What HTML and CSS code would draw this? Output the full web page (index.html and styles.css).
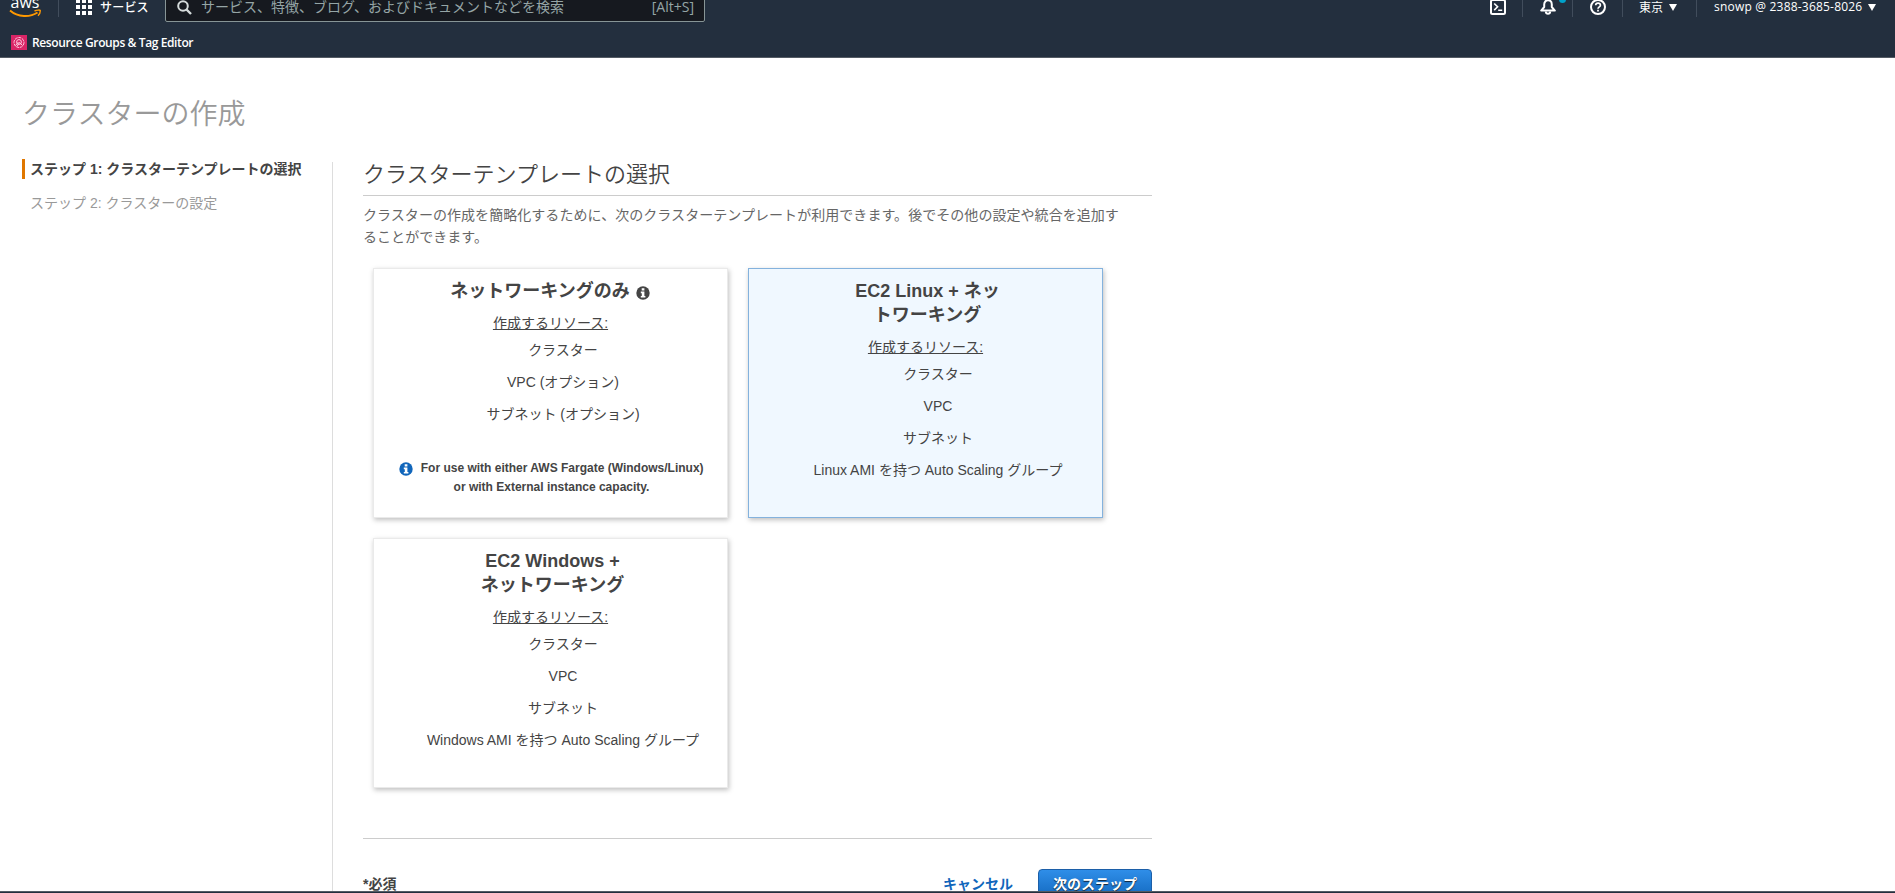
FILE: index.html
```
<!DOCTYPE html>
<html lang="ja">

<head>
    <meta charset="UTF-8">
    <meta name="viewport" content="width=device-width, initial-scale=1.0">
    <title>クラスターの作成</title>
    <link rel="stylesheet" href="styles.css">
</head>

<body>
    <header class="header">
        <div class="nav">
            <a href="#" class="logo">
                <svg width="33" height="26" viewBox="0 0 33 26">
                    <text x="1.5" y="14" textLength="29" lengthAdjust="spacingAndGlyphs" class="logo-text">aws</text>
                    <path d="M1 16.5C9 23.5 21 23.5 28.5 18.5" fill="none" stroke="#ff9900" stroke-width="1.9" />
                    <path d="M25.5 17C28 15.8 31.5 15.8 31.3 16.8C31.3 18.5 30.5 20.5 29 21.7" fill="none" stroke="#ff9900" stroke-width="1.4" />
                </svg>
            </a>
            <a href="#" class="services">
                <svg width="16" height="16" viewBox="0 0 16 16" fill="#fff">
                    <path d="M0 0h4v4H0zM6 0h4v4H6zM12 0h4v4h-4zM0 6h4v4H0zM6 6h4v4H6zM12 6h4v4h-4zM0 12h4v4H0zM6 12h4v4H6zM12 12h4v4h-4z" />
                </svg>
                <span>サービス</span>
            </a>
            <div class="search">
                <svg width="15" height="15" viewBox="0 0 15 15" fill="none" stroke="#d5dbdb" stroke-width="2">
                    <circle cx="6" cy="6" r="4.8" />
                    <path d="M9.5 9.5L14 14" stroke-width="2.4" />
                </svg>
                <span class="search-text">サービス、特徴、ブログ、およびドキュメントなどを検索</span>
                <span class="search-key">[Alt+S]</span>
            </div>
            <div class="nav-right">
                <a href="#" class="nav-icon">
                    <svg width="16" height="16" viewBox="0 0 16 16" fill="none" stroke="#fff" stroke-width="2">
                        <rect x="1" y="1" width="14" height="14" rx="1.5" />
                        <path d="M4.2 4.5L7.6 7.8L4.2 11.1M8.2 11.3h4" stroke-width="1.6" />
                    </svg>
                </a>
                <a href="#" class="nav-icon">
                    <svg width="16" height="16" viewBox="0 0 16 16" fill="none" stroke="#fff" stroke-width="2" stroke-linejoin="round">
                        <path d="M1.2 11.6L4.2 8V5.5C4.2 3 5.8 1.3 8 1.3S11.8 3 11.8 5.5V8L14.8 11.6Z" />
                        <path d="M5.8 12.5C6 15.6 10 15.6 10.2 12.5" />
                    </svg>
                    <span class="badge"></span>
                </a>
                <a href="#" class="nav-icon">
                    <svg width="16" height="16" viewBox="0 0 16 16" fill="none" stroke="#fff" stroke-width="2">
                        <circle cx="8" cy="8" r="7" />
                        <path d="M5.7 6.3C5.7 3.4 10.4 3.5 10.4 6.2C10.4 7.9 8 7.8 8 9.8M8 10.8v1.8" stroke-width="1.7" />
                    </svg>
                </a>
                <a href="#" class="nav-item region">
                    <span>東京</span>
                    <i class="caret"></i>
                </a>
                <a href="#" class="nav-item account">
                    <span>snowp @ 2388-3685-8026</span>
                    <i class="caret"></i>
                </a>
            </div>
        </div>
        <div class="favorites">
            <svg width="16" height="15" viewBox="0 0 16 15" fill="none" stroke="#ffc6dc" stroke-width="1">
                <rect width="16" height="15" fill="#d92566" stroke="none" />
                <circle cx="8" cy="7.5" r="5" stroke-dasharray="3 .7" />
                <circle cx="8" cy="7" r="2.4" />
                <path d="M4.5 10.5L7.5 7M6 11.5L8.5 7.5L11.5 10.5" />
            </svg>
            <a href="#">Resource Groups &amp; Tag Editor</a>
        </div>
    </header>

    <main class="page">
        <h1>クラスターの作成</h1>
        <div class="wizard">
            <ul class="steps">
                <li class="active">ステップ 1: クラスターテンプレートの選択</li>
                <li>ステップ 2: クラスターの設定</li>
            </ul>
            <div class="content">
                <h2>クラスターテンプレートの選択</h2>
                <p class="description">クラスターの作成を簡略化するために、次のクラスターテンプレートが利用できます。後でその他の設定や統合を追加することができます。</p>
                <div class="templates">
                    <div class="card">
                        <h3 class="with-info">ネットワーキングのみ
                            <svg class="info" width="14" height="14" viewBox="0 0 14 14">
                                <circle cx="7" cy="7" r="6.7" fill="#444" />
                                <path d="M5.7 2.3h2.7v2.2H5.7zM4.8 5.6h3.6v4.3h1v1.6H4.8V9.9h1V7.2h-1z" fill="#fff" />
                            </svg>
                        </h3>
                        <p class="resources">作成するリソース:</p>
                        <ul>
                            <li>クラスター</li>
                            <li>VPC (オプション)</li>
                            <li>サブネット (オプション)</li>
                        </ul>
                        <p class="note">
                            <svg class="info" width="14" height="14" viewBox="0 0 14 14">
                                <circle cx="7" cy="7" r="6.7" fill="#1166bb" />
                                <path d="M5.7 2.3h2.7v2.2H5.7zM4.8 5.6h3.6v4.3h1v1.6H4.8V9.9h1V7.2h-1z" fill="#fff" />
                            </svg>
                            For use with either AWS Fargate (Windows/Linux)<br>or with External instance capacity.
                        </p>
                    </div>
                    <div class="card selected">
                        <h3>EC2 Linux + ネッ<br>トワーキング</h3>
                        <p class="resources">作成するリソース:</p>
                        <ul>
                            <li>クラスター</li>
                            <li>VPC</li>
                            <li>サブネット</li>
                            <li>Linux AMI を持つ Auto Scaling グループ</li>
                        </ul>
                    </div>
                    <div class="card">
                        <h3>EC2 Windows +<br>ネットワーキング</h3>
                        <p class="resources">作成するリソース:</p>
                        <ul>
                            <li>クラスター</li>
                            <li>VPC</li>
                            <li>サブネット</li>
                            <li>Windows AMI を持つ Auto Scaling グループ</li>
                        </ul>
                    </div>
                </div>
                <div class="actions">
                    <span class="required">*必須</span>
                    <a href="#" class="cancel">キャンセル</a>
                    <button class="next">次のステップ</button>
                </div>
            </div>
        </div>
    </main>
    <footer class="footer"></footer>
</body>

</html>
```
FILE: styles.css
```
* {
    margin: 0;
    padding: 0;
    box-sizing: border-box;
}

body {
    height: 893px;
    overflow: hidden;
    display: flex;
    flex-direction: column;
    background: #fff;
    color: #444;
    font-family: "Liberation Sans", "Noto Sans CJK JP", sans-serif;
    font-size: 14px;
}

a {
    color: inherit;
    text-decoration: none;
}

ul {
    list-style: none;
}

svg {
    display: block;
    flex: none;
}

/* header */
.header {
    flex: none;
    height: 58px;
    overflow: hidden;
    background: #232f3e;
    border-bottom: 1px solid #545b64;
    color: #fff;
    font-family: "Open Sans", "Noto Sans CJK JP", sans-serif;
    font-size: 12px;
}

.nav {
    height: 40px;
    margin-top: -13px;
    display: flex;
    align-items: center;
}

.logo {
    width: 59px;
    height: 20px;
    padding-left: 9px;
    display: flex;
    align-items: center;
    border-right: 1px solid #414d5c;
}

.logo-text {
    font-family: "Open Sans", sans-serif;
    font-size: 17px;
    font-weight: 500;
    fill: #fff;
}

.services {
    width: 106px;
    padding-left: 17px;
    display: flex;
    align-items: center;
    gap: 8px;
    font-weight: 500;
}

.services span {
    padding-bottom: 1px;
    letter-spacing: 0.2px;
}

.search {
    width: 540px;
    height: 30px;
    padding: 0 10px 0 11px;
    display: flex;
    align-items: center;
    background: #16191f;
    border: 1px solid #879596;
    border-radius: 2px;
    color: #95a5a6;
    font-size: 14px;
}

.search-text {
    flex: 1;
    padding: 0 0 2px 9px;
}

.search-key {
    padding-bottom: 2px;
}

.nav-right {
    margin-left: auto;
    display: flex;
    align-items: center;
}

.nav-icon,
.nav-item {
    height: 20px;
    display: flex;
    align-items: center;
}

.nav-icon {
    position: relative;
    width: 50px;
    justify-content: center;
    border-right: 1px solid #414d5c;
}

.badge {
    position: absolute;
    top: 1px;
    right: 6px;
    width: 7px;
    height: 7px;
    margin-top: -2px;
    border-radius: 50%;
    background: #00a1c9;
}

.nav-item {
    gap: 6px;
}

.nav-item span {
    padding-bottom: 1px;
}

.region {
    width: 74px;
    padding-left: 16px;
    border-right: 1px solid #414d5c;
}

.account {
    width: 198px;
    padding-left: 17px;
    font-weight: 500;
    letter-spacing: 0.2px;
}

.caret {
    border: 4.5px solid transparent;
    border-top: 7px solid #fff;
    border-bottom: 0;
}

.favorites {
    height: 30px;
    padding-left: 11px;
    display: flex;
    align-items: center;
    gap: 5px;
    font-weight: 600;
    letter-spacing: -0.39px;
}

/* wizard */
.page {
    flex: 1;
    min-height: 0;
    padding: 36px 22px 0;
    display: flex;
    flex-direction: column;
    overflow: hidden;
}

h1 {
    height: 65px;
    line-height: 42px;
    color: #999;
    font-size: 28px;
    font-weight: 350;
}

.wizard {
    flex: 1;
    min-height: 0;
    display: flex;
}

.steps {
    width: 310px;
}

.steps li {
    height: 20px;
    margin-bottom: 14px;
    padding-left: 5px;
    border-left: 3px solid transparent;
    line-height: 20px;
    color: #999;
}

.steps .active {
    border-color: #e07700;
    color: #444;
    font-weight: bold;
}

.content {
    width: 820px;
    margin-top: 3px;
    padding-left: 30px;
    border-left: 1px solid #ddd;
}

h2 {
    height: 34px;
    line-height: 26px;
    border-bottom: 1px solid #ccc;
    font-size: 22px;
    font-weight: 350;
}

.description {
    padding: 9px 30px 10px 0;
    line-height: 21.5px;
    letter-spacing: 0.05px;
    color: #666;
}

.templates {
    height: 581px;
    display: flex;
    flex-wrap: wrap;
    align-content: flex-start;
    gap: 20px;
    padding: 10px;
    border-bottom: 1px solid #ccc;
}

.card {
    width: 355px;
    height: 250px;
    padding-top: 10px;
    border: 1px solid #eaeaea;
    box-shadow: 1px 2px 5px rgba(0, 0, 0, 0.25);
    background: #fff;
    text-align: center;
}

.card.selected {
    background: #f0f8ff;
    border-color: #84b2dd;
}

.card h3 {
    padding-left: 4px;
    font-size: 18px;
    line-height: 24px;
}

.card .with-info {
    padding: 0 1px 0 0;
}

.info {
    display: inline-block;
    vertical-align: -3px;
}

.with-info .info {
    margin-left: 1px;
}

.resources {
    margin-top: 10px;
    line-height: 20px;
    text-decoration: underline;
}

.card ul {
    padding-left: 25px;
}

.card li {
    height: 20px;
    margin: 7px 0 12px;
    line-height: 20px;
}

.card li + li {
    margin-top: 12px;
}

.note {
    padding: 23px 0 0 2px;
    font-size: 12px;
    font-weight: bold;
    line-height: 19px;
}

.note .info {
    margin-right: 4px;
    vertical-align: -4px;
}

.actions {
    display: flex;
    align-items: center;
    padding-top: 30px;
    font-weight: bold;
}

.required {
    flex: 1;
    padding-bottom: 4px;
}

.cancel {
    padding-bottom: 4px;
    color: #1166bb;
}

.next {
    width: 114px;
    height: 32px;
    margin-left: 25px;
    padding-bottom: 4px;
    border: 1px solid #1c5fa8;
    border-radius: 4px;
    background: linear-gradient(#2f8ee8, #1166bb);
    color: #fff;
    font: inherit;
    text-shadow: 0 1px 1px #123;
}

.footer {
    flex: none;
    height: 2px;
    background: #232f3e;
    border-top: 1px solid #545b64;
}
```
